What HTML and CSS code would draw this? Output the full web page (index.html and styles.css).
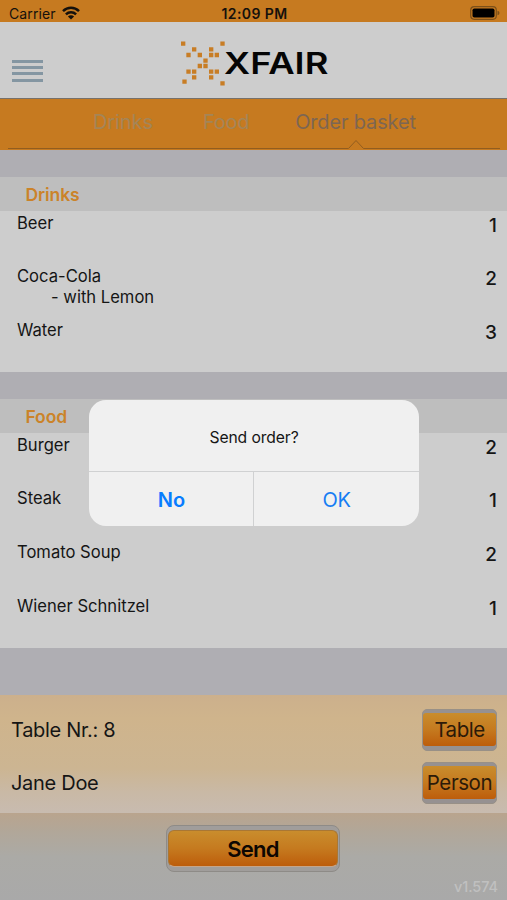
FILE: index.html
```html
<!DOCTYPE html>
<html lang="en">
<head>
<meta charset="utf-8">
<title>XFAIR</title>
<link rel="stylesheet" href="styles.css">
</head>
<body>
<div class="app">
  <div class="status">
    <div class="carrier"><span>Carrier</span>
      <svg class="wifi" viewBox="0 0 18 14"><g fill="none" stroke="#15110c" stroke-width="2.5"><path d="M1 5.2C5.6.7 12.400.7 17 5.200"/><path d="M3.900 8.400c2.900-2.800 7.300-2.800 10.200 0"/></g><path d="M9 13.600 5.900 10.500c1.800-1.600 4.400-1.600 6.200 0z" fill="#15110c"/></svg>
    </div>
    <span class="clock">12:09 PM</span>
    <svg class="battery" viewBox="0 0 30 14"><rect x=".7" y=".7" width="25.600" height="12.600" rx="3.500" fill="none" stroke="#7c5019" stroke-width="1.200"/><rect x="2.500" y="2.500" width="22" height="9" rx="1.800" fill="#000"/><path d="M27.500 4.700q2 .5 2 2.300t-2 2.300z" fill="#7c5019"/></svg>
  </div>
  <header class="header">
    <div class="menu"><i></i><i></i><i></i><i></i></div>
    <svg class="logo" viewBox="0 0 510 180">
      <path stroke="#c87d25" stroke-width="13" d="M33 35h13M151 35h13M66 52h13M117 52h13M49 69h13M83 69h13M117 69h13M134 69h13M100 86h13M83 102h13M100 102h13M49 119h13M66 119h13M117 119h13M134 119h13M66 136h13M117 136h13M37 149h13M151 154h13"/>
      <text x="162" y="126" textLength="313" lengthAdjust="spacingAndGlyphs">XFAIR</text>
    </svg>
  </header>
  <nav class="tabs">
    <span class="tab drinks">Drinks</span><span class="tab food">Food</span><span class="tab active">Order basket</span>
    <svg class="marker" viewBox="0 0 507 11"><path d="M8 9.500H348.500L356 1.500l7.500 8H500" fill="none" stroke="#925d1f"/></svg>
  </nav>
  <section class="group">
    <h2>Drinks</h2>
    <div class="row"><p>Beer</p><b>1</b></div>
    <div class="row"><p>Coca-Cola<span>- with Lemon</span></p><b>2</b></div>
    <div class="row"><p>Water</p><b>3</b></div>
  </section>
  <section class="group">
    <h2>Food</h2>
    <div class="row"><p>Burger</p><b>2</b></div>
    <div class="row"><p>Steak</p><b>1</b></div>
    <div class="row"><p>Tomato Soup</p><b>2</b></div>
    <div class="row"><p>Wiener Schnitzel</p><b>1</b></div>
  </section>
  <div class="details">
    <div class="detail"><span>Table Nr.: 8</span><button class="btn"><span class="t-table">Table</span></button></div>
    <div class="detail"><span>Jane Doe</span><button class="btn"><span class="t-person">Person</span></button></div>
  </div>
  <footer class="footer">
    <button class="btn send"><span>Send</span></button>
    <span class="version">v1.574</span>
  </footer>
</div>
<div class="alert">
  <div class="message">Send order?</div>
  <div class="actions"><div class="no">No</div><div class="ok">OK</div></div>
</div>
</body>
</html>
```

FILE: styles.css
```css
* { box-sizing: border-box; }
body { margin: 0; font-family: Inter, "Liberation Sans", sans-serif; color: #151515; background: #afaeb3; }
h2, p { margin: 0; }
.app { width: 507px; height: 900px; display: flex; flex-direction: column; overflow: hidden; }

.status { height: 22px; flex: none; background: #c67a20; display: grid; grid-template-columns: 1fr auto 1fr; align-items: center; padding: 5px 7px 0 9px; font-size: 14px; line-height: 17px; color: #15110c; }
.carrier { display: flex; gap: 6px; align-items: center; letter-spacing: .1px; }
.wifi { width: 18px; height: 14px; margin-top: -2px; }
.clock { font-weight: 600; letter-spacing: .4px; }
.battery { width: 30px; height: 14px; justify-self: end; margin-top: -2px; }

.header { height: 77px; flex: none; background: #cdcdcd; display: flex; border-bottom: 1px solid #77716a; }
.menu { margin: 38px 0 0 12px; width: 31px; display: flex; flex-direction: column; gap: 3.200px; }
.menu i { height: 3px; flex: none; background: #8496a2; }
.logo { width: 170px; height: 60px; margin: 10px 0 0 127px; }
.logo text { font-family: Inter, sans-serif; font-size: 89px; font-weight: 600; fill: #050505; }

.tabs { height: 51px; flex: none; background: #c67a20; position: relative; display: flex; padding: 11px 0 0 93px; font-size: 20px; line-height: 25px; color: #a48558; }
.food { margin-left: 48px; letter-spacing: -.25px; }
.active { margin-left: 46px; color: #7d6653; letter-spacing: -.15px; }
.drinks { letter-spacing: -.1px; padding-right: 2px; }
.marker { position: absolute; left: 0; bottom: 0; width: 507px; height: 11px; }

.group { margin-top: 27px; flex: none; background: #cdcdcd; }
.group + .group { margin-top: 26.600px; }
.group h2 { height: 34px; padding-left: 25.500px; background: #bebebe; color: #cb8329; font-size: 17.500px; line-height: 35px; font-weight: 600; letter-spacing: -.1px; }
.row { height: 53.800px; padding: 1.600px 10px 0 17px; display: flex; justify-content: space-between; font-size: 16.600px; line-height: 21px; }
.row p span { display: block; margin-left: 34px; }
.row b { font-weight: 500; font-size: 19px; line-height: 25px; }

.details { margin-top: 46.800px; height: 118px; flex: none; padding: 14px 10px 0 11px; background: linear-gradient(#ccb08c, #cfb48c 20%, #ccb592 62%, #c9b9a6 83%, #c8bbb0); display: flex; flex-direction: column; gap: 11px; font-size: 20px; }
.detail { height: 42px; display: flex; justify-content: space-between; align-items: center; letter-spacing: -.3px; }
.btn { width: 75px; height: 42px; padding: 3px 0 4px; border: 1px solid #989087; border-radius: 5px; background: #969191; color: #2c1a08; font: 20.500px/34px Inter, sans-serif; }
.btn span { display: block; height: 33px; border-radius: 3px; background: linear-gradient(#c98d2d, #c57a1f 50%, #bd5d0b); }
.t-table { letter-spacing: -.5px; }
.t-person { letter-spacing: -.4px; }
.footer { flex: 1; background: linear-gradient(#b9a48e, #b1a799 22%, #abaaa6 50%, #a9a9a9); position: relative; padding: 12px 0 0 166px; }
.send { display: block; width: 174px; height: 47px; padding: 4px 1px; border: 1px solid #8e8b87; border-radius: 8px; background: #a09d9b; color: #0d0702; font: 600 22px/37px Inter, sans-serif; letter-spacing: -.7px; }
.send span { height: 37px; border-radius: 6px; border: 1px solid #a97734; border-bottom-color: #c5a58a; }
.version { position: absolute; right: 9px; bottom: 4px; font-size: 14.500px; line-height: 18px; font-weight: 500; letter-spacing: -.1px; color: #c0c0c0; }

.alert { position: absolute; left: 89px; top: 400px; width: 330px; height: 126px; border-radius: 17px; background: #f0f0f0; overflow: hidden; }
.message { height: 72px; display: flex; justify-content: center; align-items: center; padding-top: 3px; font-size: 15.700px; letter-spacing: -.1px; border-bottom: 1px solid #d0d1d2; }
.actions { height: 54px; display: grid; grid-template-columns: 1fr 1fr; font-size: 20px; line-height: 56px; text-align: center; color: #167df3; }
.no { font-weight: 600; border-right: 1px solid #d0d1d2; padding-left: 1px; color: #087cff; }
.ok { letter-spacing: -.4px; }
```
